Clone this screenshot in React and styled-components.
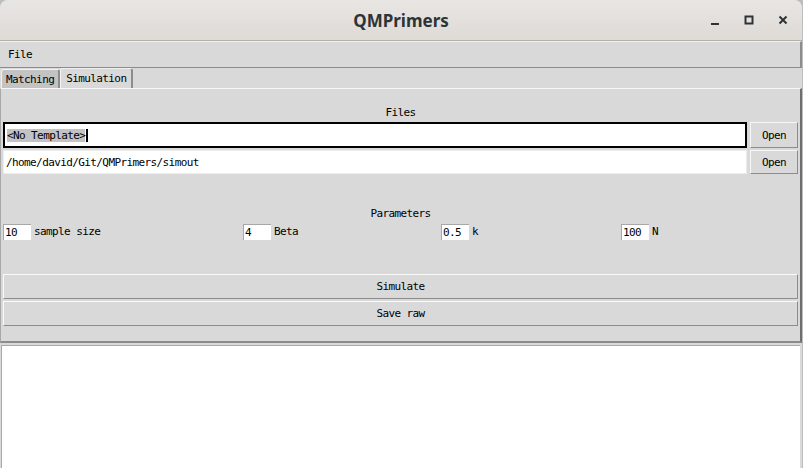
import React from 'react';
import styled, { createGlobalStyle } from 'styled-components';

const GlobalStyle = createGlobalStyle`
  html, body {
    margin: 0;
    padding: 0;
    background: #bdbdbd;
    overflow: hidden;
  }
`;

const tkFont = `
  font-family: "DejaVu Sans Mono", "Liberation Mono", monospace;
  font-size: 11px;
  letter-spacing: -0.6px;
  color: #000;
`;

const Window = styled.div`
  width: 802px;
  height: 468px;
  display: flex;
  flex-direction: column;
  background: #d9d9d9;
  border-radius: 8px 8px 0 0;
  overflow: hidden;
`;

const TitleBar = styled.div`
  height: 40px;
  flex: none;
  display: grid;
  grid-template-columns: 1fr auto 1fr;
  align-items: center;
  background: linear-gradient(#e8e6e3, #dedad6);
  border-bottom: 1px solid #b6b0aa;
`;

const Title = styled.div`
  grid-column: 2;
  font-family: "Noto Sans", "Open Sans", sans-serif;
  font-weight: 700;
  font-size: 17px;
  color: #2e3436;
  padding-top: 1px;
`;

const Controls = styled.div`
  grid-column: 3;
  justify-self: end;
  display: flex;
  padding-right: 2px;
`;

const CtrlButton = styled.div`
  width: 34px;
  height: 40px;
  display: flex;
  align-items: center;
  justify-content: center;
  color: #2e3436;
`;

const MenuBar = styled.div`
  height: 25px;
  flex: none;
  display: flex;
  align-items: center;
  padding-left: 8px;
  border-top: 1px solid #f2f2f2;
  border-bottom: 1px solid #8c8c8c;
  border-right: 2px solid #8c8c8c;
  ${tkFont}
`;

const TabRow = styled.div`
  height: 20px;
  flex: none;
  display: flex;
  align-items: flex-end;
  padding-left: 1px;
`;

const Tab = styled.div`
  height: ${p => (p.$active ? 20 : 19)}px;
  box-sizing: border-box;
  display: flex;
  align-items: center;
  padding: 0 ${p => (p.$active ? 5 : 4)}px;
  background: ${p => (p.$active ? '#d9d9d9' : '#c3c3c3')};
  border-top: 1px solid #f2f2f2;
  border-left: 1px solid #f2f2f2;
  border-right: 2px solid #8c8c8c;
  border-radius: 3px 3px 0 0;
  ${tkFont}
`;

const Panel = styled.div`
  flex: none;
  height: 255px;
  box-sizing: border-box;
  display: flex;
  flex-direction: column;
  padding: 0 2px 0 2px;
  border-top: 1px solid #f7f7f7;
  border-left: 1px solid #a8a8a8;
  border-right: 2px solid #6e6e6e;
  border-bottom: 2px solid #8c8c8c;
`;

const SectionLabel = styled.div`
  height: 15px;
  line-height: 15px;
  text-align: center;
  margin-top: ${p => p.$top}px;
  ${tkFont}
`;

const FileRow = styled.div`
  display: flex;
  gap: 3px;
  height: ${p => p.$h}px;
  margin-top: ${p => p.$top}px;
`;

const PathEntry = styled.div`
  flex: 1;
  box-sizing: border-box;
  background: #fff;
  display: flex;
  align-items: center;
  padding-left: 2px;
  border: ${p => (p.$focus ? '2px solid #000' : '1px solid #ececec')};
  ${tkFont}
`;

const Selected = styled.span`
  background: #c3c3c3;
`;

const Cursor = styled.span`
  display: inline-block;
  width: 2px;
  height: 13px;
  background: #000;
  margin-left: 1px;
`;

const SmallButton = styled.div`
  width: 48px;
  box-sizing: border-box;
  display: flex;
  align-items: center;
  justify-content: center;
  background: #d9d9d9;
  border-top: 1px solid #f7f7f7;
  border-left: 1px solid #f7f7f7;
  border-right: 1px solid #8c8c8c;
  border-bottom: 1px solid #8c8c8c;
  ${tkFont}
`;

const ParamGrid = styled.div`
  display: grid;
  grid-template-columns: 240px 198px 180px 1fr;
  margin-top: 2px;
  height: 17px;
  align-items: center;
`;

const Param = styled.div`
  display: flex;
  align-items: center;
  gap: 3px;
  ${tkFont}
`;

const NumEntry = styled.div`
  width: 28px;
  height: 16px;
  box-sizing: border-box;
  background: #fff;
  padding-left: 1px;
  display: flex;
  align-items: center;
  border-top: 1px solid #a8a8a8;
  border-left: 1px solid #a8a8a8;
  ${tkFont}
`;

const WideButton = styled.div`
  height: 25px;
  box-sizing: border-box;
  display: flex;
  align-items: center;
  justify-content: center;
  margin-top: ${p => p.$top}px;
  background: #d9d9d9;
  border-top: 1px solid #fafafa;
  border-left: 1px solid #fafafa;
  border-right: 1px solid #8c8c8c;
  border-bottom: 1px solid #8c8c8c;
  ${tkFont}
`;

const Output = styled.div`
  flex: 1;
  margin: 2px 2px 0 1px;
  background: #fff;
  border-top: 1px solid #a8a8a8;
  border-left: 1px solid #a8a8a8;
`;

const params = [
  { value: '10', label: 'sample size' },
  { value: '4', label: 'Beta' },
  { value: '0.5', label: 'k' },
  { value: '100', label: 'N' },
];

const App = () => (
  <>
    <GlobalStyle />
    <Window>
      <TitleBar>
        <Title>QMPrimers</Title>
        <Controls>
          <CtrlButton>
            <svg width="12" height="12" viewBox="0 0 12 12">
              <rect x="2" y="9" width="8" height="2" fill="currentColor" />
            </svg>
          </CtrlButton>
          <CtrlButton>
            <svg width="12" height="12" viewBox="0 0 12 12">
              <rect x="2.5" y="2.5" width="7" height="7" fill="none" stroke="currentColor" strokeWidth="2" />
            </svg>
          </CtrlButton>
          <CtrlButton>
            <svg width="12" height="12" viewBox="0 0 12 12">
              <path d="M2.5 2.5 L9.5 9.5 M9.5 2.5 L2.5 9.5" stroke="currentColor" strokeWidth="2" />
            </svg>
          </CtrlButton>
        </Controls>
      </TitleBar>

      <MenuBar>File</MenuBar>

      <TabRow>
        <Tab>Matching</Tab>
        <Tab $active>Simulation</Tab>
      </TabRow>

      <Panel>
        <SectionLabel $top={16}>Files</SectionLabel>
        <FileRow $h={26} $top={2}>
          <PathEntry $focus>
            <Selected>&lt;No Template&gt;</Selected>
            <Cursor />
          </PathEntry>
          <SmallButton>Open</SmallButton>
        </FileRow>
        <FileRow $h={24} $top={2}>
          <PathEntry>/home/david/Git/QMPrimers/simout</PathEntry>
          <SmallButton>Open</SmallButton>
        </FileRow>

        <SectionLabel $top={32}>Parameters</SectionLabel>
        <ParamGrid>
          {params.map(p => (
            <Param key={p.label}>
              <NumEntry>{p.value}</NumEntry>
              {p.label}
            </Param>
          ))}
        </ParamGrid>

        <WideButton $top={34}>Simulate</WideButton>
        <WideButton $top={2}>Save raw</WideButton>
      </Panel>

      <Output />
    </Window>
  </>
);

export default App;
